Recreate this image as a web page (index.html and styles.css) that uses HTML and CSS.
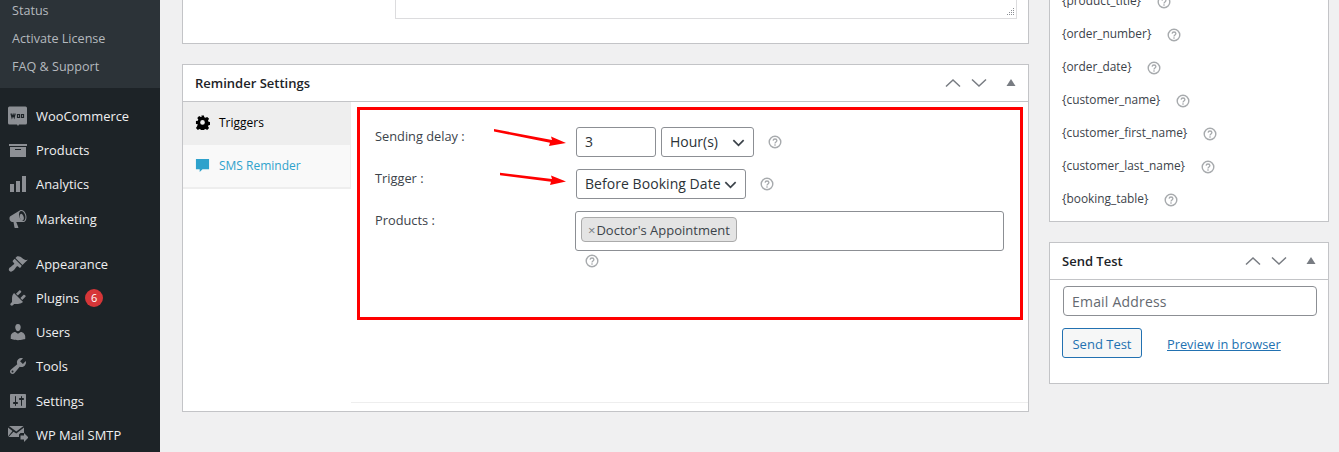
FILE: index.html
```html
<!DOCTYPE html>
<html lang="en">
<head>
<meta charset="utf-8">
<title>Reminder Settings</title>
<link rel="stylesheet" href="styles.css">
</head>
<body>
<aside class="sidebar">
  <ul class="submenu">
    <li>Status</li>
    <li>Activate License</li>
    <li>FAQ &amp; Support</li>
  </ul>
  <ul class="menu">
    <li><svg class="mi" viewBox="0 0 20 20"><path d="M1.500 .5h16A1.500 1.500 0 0 1 19 2v15a1.500 1.500 0 0 1-1.500 1.500H11l-1 1.500-1-1.500H1.500A1.500 1.500 0 0 1 0 17V2A1.500 1.500 0 0 1 1.500 .5z"/><path class="cut" d="M3 7.500l1 4 1.100-3 1.100 3 1-4M9.500 8.500h2v3h-2zM13.500 8.500h2v3h-2z"/></svg>WooCommerce</li>
    <li><svg class="mi" viewBox="0 0 20 20"><path d="M19 4v2H1V4h18zM2 7h16v10H2V7zm11 3V9H7v1h6z"/></svg>Products</li>
    <li><svg class="mi" viewBox="0 0 20 20"><path d="M18 18V2h-4v16h4zm-6 0V7H8v11h4zm-6 0v-8H2v8h4z"/></svg>Analytics</li>
    <li class="sep"><svg class="mi" viewBox="0 0 20 20"><path d="M18.150 5.940c.46 1.620.38 3.220-.02 4.480-.42 1.280-1.260 2.180-2.300 2.480-.16.06-.26.06-.4.06-.06.02-.12.02-.18.02-.06.02-.14.02-.22.02h-6.800l2.220 5.500c.02.14-.06.26-.14.34-.08.1-.24.16-.34.16H6.950c-.1 0-.26-.06-.34-.16-.08-.08-.16-.2-.14-.34l-1-5.500H4.250l-.02-.02c-.5.06-1.080-.18-1.540-.62s-.88-1.080-1.060-1.880c-.24-.8-.2-1.560-.02-2.200.18-.62.58-1.080 1.060-1.300l.02-.02 9-5.400c.1-.06.18-.1.24-.16.06-.04.14-.08.24-.12.16-.08.28-.12.5-.18 1.040-.3 2.240.1 3.220 1 .98.88 1.800 2.240 2.260 3.860zm-2.580 5.980h-.02c.4-.1.74-.34 1.040-.7.58-.7.86-1.760.86-3.040-.02-.64-.1-1.300-.28-1.980-.34-1.360-1.020-2.500-1.780-3.240s-1.680-1.100-2.460-.88c-.82.22-1.400.96-1.700 2-.32 1.040-.28 2.360.06 3.720.38 1.360 1 2.500 1.800 3.240.78.74 1.620 1.100 2.480.88zm-2.540-7.080c.22-.04.42-.02.62.04.38.16.76.48 1.120 1s.66 1.120.84 1.820c.24.68.28 1.380.22 1.980-.08.6-.26 1.160-.64 1.460-.18.18-.38.3-.6.36-.24.06-.46.06-.68-.02-.38-.14-.76-.48-1.100-1s-.68-1.120-.84-1.820c-.24-.7-.28-1.400-.2-1.980.06-.6.26-1.160.62-1.460.18-.2.38-.32.64-.38z"/></svg>Marketing</li>
    <li><svg class="mi" viewBox="0 0 20 20"><path d="M14.480 11.060L7.410 3.990l1.500-1.500c.5-.56 2.300-.47 3.510.32 1.210.8 1.430 1.280 2.910 2.100 1.180.64 2.450 1.260 4.450.85zm-.71.71L6.700 4.700 4.930 6.470c-.39.39-.39 1.020 0 1.410l1.060 1.060c.39.39.39 1.030 0 1.420-.6.6-1.430 1.110-2.210 1.690-.35.26-.7.53-1.010.84C1.430 13.230 0 15.500 1.500 17c1.500 1.500 3.270.07 4.670-1.330.31-.31.58-.66.84-1.010.58-.78 1.090-1.610 1.690-2.210.39-.39 1.030-.39 1.420 0l1.060 1.060c.39.39 1.020.39 1.410 0z"/></svg>Appearance</li>
    <li><svg class="mi" viewBox="0 0 20 20"><path d="M13.110 4.360L9.870 7.600 8 5.730l3.240-3.240c.35-.34 1.050-.2 1.560.32.52.51.66 1.210.31 1.550zm-8 1.770l.91-1.120 9.010 9.010-1.190.84c-.71.71-2.630 1.160-3.820 1.160H6.140L4.900 17.260c-.59.59-1.540.59-2.120 0-.59-.58-.59-1.530 0-2.120l1.240-1.240v-3.880c0-1.130.4-3.190 1.090-3.890zm7.260 3.970l3.240-3.240c.34-.35 1.040-.21 1.550.31.52.51.66 1.210.31 1.550l-3.240 3.250z"/></svg>Plugins<span class="badge">6</span></li>
    <li><svg class="mi" viewBox="0 0 20 20"><path d="M10 9.250c-2.270 0-2.730-3.440-2.730-3.440C7 4.020 7.820 2 9.970 2c2.160 0 2.980 2.020 2.710 3.810 0 0-.41 3.440-2.680 3.440zm0 2.570L12.720 10c2.390 0 4.520 2.330 4.520 4.530v2.490s-3.650 1.130-7.240 1.130c-3.650 0-7.240-1.130-7.240-1.130v-2.490c0-2.250 1.940-4.480 4.470-4.480z"/></svg>Users</li>
    <li><svg class="mi" viewBox="0 0 20 20"><path d="M16.680 9.770c-1.340 1.340-3.300 1.670-4.950.99l-5.410 6.520c-.99.99-2.590.99-3.580 0s-.99-2.590 0-3.570l6.520-5.420c-.68-1.650-.35-3.610.99-4.950 1.280-1.280 3.120-1.620 4.720-1.060l-2.890 2.890 2.820 2.820 2.860-2.870c.53 1.580.18 3.390-1.080 4.650zM3.810 16.210c.4.39 1.040.39 1.430 0 .4-.4.4-1.040 0-1.430-.39-.4-1.030-.4-1.430 0-.39.39-.39 1.030 0 1.430z"/></svg>Tools</li>
    <li><svg class="mi" viewBox="0 0 20 20"><path d="M18 16V4c0-.55-.45-1-1-1H3c-.55 0-1 .45-1 1v12c0 .55.45 1 1 1h14c.55 0 1-.45 1-1zM8 11h1c.55 0 1 .45 1 1s-.45 1-1 1H8v1.500c0 .28-.22.5-.5.5s-.5-.22-.5-.5V13H6c-.55 0-1-.45-1-1s.45-1 1-1h1V5.500c0-.28.22-.5.5-.5s.5.22.5.5V11zm5-2h-1c-.55 0-1-.45-1-1s.45-1 1-1h1V5.500c0-.28.22-.5.5-.5s.5.22.5.5V7h1c.55 0 1 .45 1 1s-.45 1-1 1h-1v5.500c0 .28-.22.5-.5.5s-.5-.22-.5-.5V9z"/></svg>Settings</li>
    <li><svg class="mi" viewBox="0 0 20 20"><path d="M1 1h14.500L8.300 6.500zM0 2.500L4.500 6 0 11.500zM16 2.500V8h-3.500L11 9.500v2.500H.5L5.500 6.800l2.800 1.700L16 2.500zM12.500 10.500h3.500V8l4.500 4.500L16 17v-2.500h-3.500z"/></svg>WP Mail SMTP</li>
  </ul>
</aside>

<main class="content">
  <div class="col-main">
    <section class="card top-card">
      <div class="textarea"><svg class="grip" viewBox="0 0 10 10"><path d="M8 1h1v1H8zM6 3h1v1H6zM8 3h1v1H8zM4 5h1v1H4zM6 5h1v1H6zM8 5h1v1H8zM2 7h1v1H2zM4 7h1v1H4zM6 7h1v1H6zM8 7h1v1H8z"/></svg></div>
    </section>

    <section class="card reminder">
      <header class="card-head">
        <h2>Reminder Settings</h2>
        <div class="head-tools">
          <svg class="tool" viewBox="0 0 16 10"><path d="M1 8.500L8 2l7 6.500"/></svg>
          <svg class="tool" viewBox="0 0 16 10"><path d="M1 1.500L8 8l7-6.500"/></svg>
          <svg class="tri" viewBox="0 0 10 7"><path d="M5 0l4.500 7H.5z"/></svg>
        </div>
      </header>
      <div class="card-body">
        <nav class="tabs">
          <div class="tab active">
            <svg class="tab-ic" viewBox="0 0 16 16"><path d="M6.500 1h3l.4 2 1.300.6 1.800-1 2 2.100-1.100 1.700.5 1.300 2 .4v3l-2 .4-.5 1.300 1.100 1.700-2 2-1.800-1-1.300.5-.4 2h-3l-.4-2-1.300-.5-1.800 1-2-2 1.100-1.700L3 10.500l-2-.4v-3l2-.4.500-1.300-1.100-1.700 2-2.100 1.800 1 1.300-.6zM8 6a2.500 2.500 0 1 0 0 5 2.500 2.500 0 0 0 0-5z" fill-rule="evenodd" transform="translate(0 -.6)"/></svg>
            Triggers
          </div>
          <div class="tab sms">
            <svg class="tab-ic" viewBox="0 0 16 16"><path d="M1 1h14v11H8l-3 3v-3H1z"/></svg>
            SMS Reminder
          </div>
        </nav>
        <div class="panel">
          <div class="form">
            <div class="row row-delay">
              <label>Sending delay :</label>
              <input class="field num" type="text" value="3">
              <select class="field sel hours"><option>Hour(s)</option></select>
              <svg class="help help-delay" viewBox="0 0 14 14"><use href="#q"/></svg>
            </div>
            <div class="row row-trigger">
              <label>Trigger :</label>
              <select class="field sel trigger"><option>Before Booking Date</option></select>
              <svg class="help help-delay" viewBox="0 0 14 14"><use href="#q"/></svg>
            </div>
            <div class="row row-products">
              <label>Products :</label>
              <div class="products-cell">
                <div class="multi"><span class="tag"><span class="x">×</span>Doctor's Appointment</span></div>
                <svg class="help help-prod" viewBox="0 0 14 14"><use href="#q"/></svg>
              </div>
            </div>
          </div>
          <div class="annot"></div>
          <svg class="arrows" viewBox="0 0 300 100">
            <path d="M0 0L58 11L57 7.500L72 14L55 17L56 13.800L0 2.500z"/>
            <path d="M6 43.800L58 50L57 46.500L72 52.500L56 56L57 52.800L6 46.300z"/>
          </svg>
        </div>
      </div>
    </section>
  </div>

  <div class="col-side">
    <section class="card tags">
      <p>{product_title}<svg class="help" viewBox="0 0 14 14"><use href="#q"/></svg></p>
      <p>{order_number}<svg class="help" viewBox="0 0 14 14"><use href="#q"/></svg></p>
      <p>{order_date}<svg class="help" viewBox="0 0 14 14"><use href="#q"/></svg></p>
      <p>{customer_name}<svg class="help" viewBox="0 0 14 14"><use href="#q"/></svg></p>
      <p>{customer_first_name}<svg class="help" viewBox="0 0 14 14"><use href="#q"/></svg></p>
      <p>{customer_last_name}<svg class="help" viewBox="0 0 14 14"><use href="#q"/></svg></p>
      <p>{booking_table}<svg class="help" viewBox="0 0 14 14"><use href="#q"/></svg></p>
    </section>

    <section class="card send">
      <header class="card-head">
        <h2>Send Test</h2>
        <div class="head-tools">
          <svg class="tool" viewBox="0 0 16 10"><path d="M1 8.500L8 2l7 6.500"/></svg>
          <svg class="tool" viewBox="0 0 16 10"><path d="M1 1.500L8 8l7-6.500"/></svg>
          <svg class="tri" viewBox="0 0 10 7"><path d="M5 0l4.500 7H.5z"/></svg>
        </div>
      </header>
      <div class="send-body">
        <input class="email" type="text" placeholder="Email Address">
        <div class="send-actions">
          <button class="btn" type="button">Send Test</button>
          <a class="preview" href="#">Preview in browser</a>
        </div>
      </div>
    </section>
  </div>
</main>

<svg class="defs" width="0" height="0">
  <symbol id="q" viewBox="0 0 14 14">
    <circle cx="7" cy="7" r="5.800" fill="none" stroke="#a7aaad" stroke-width="1.400"/>
    <path d="M5.100 5.600C5.200 4.500 6 4 7 4s1.900.6 1.900 1.600c0 1.300-1.900 1.400-1.900 2.800" fill="none" stroke="#a7aaad" stroke-width="1.300"/>
    <rect x="6.300" y="9.300" width="1.400" height="1.400" fill="#a7aaad"/>
  </symbol>
</svg>
</body>
</html>
```

FILE: styles.css
```css
* { box-sizing: border-box; }
html, body { margin: 0; height: 452px; overflow: hidden; }
body {
  display: flex;
  background: #f0f0f1;
  font-family: "Open Sans", sans-serif;
  font-size: 13px;
  color: #3c434a;
}
ul { list-style: none; margin: 0; padding: 0; }

/* sidebar */
.sidebar { width: 160px; flex: none; height: 452px; background: #1d2327; overflow: hidden; }
.submenu { background: #2c3338; height: 88px; padding-top: 1px; color: #b4b9be; font-size: 12.600px; margin-bottom: 11px; }
.submenu li { height: 28px; line-height: 20px; padding: 0 0 0 12px; }
.menu li { height: 34.200px; display: flex; align-items: center; color: #f0f0f1; font-size: 12.900px; }
.menu li.sep { margin-bottom: 11px; }
.mi { width: 20px; height: 20px; margin: 0 8px 0 8px; flex: none; fill: #8c8f94; }
.mi .cut { fill: none; stroke: #1d2327; stroke-width: 1.200; }
.badge {
  width: 18px; height: 18px; margin-left: 6px; border-radius: 50%;
  background: #d63638; color: #fff; font-size: 11px; line-height: 18px; text-align: center;
}

/* columns */
.content { flex: 1; display: flex; padding-left: 22px; min-width: 0; }
.col-main { width: 847px; flex: none; }
.col-side { width: 280px; flex: none; margin-left: 20px; }
.card { background: #fff; border: 1px solid #c3c4c7; }

.top-card { height: 44px; border-top: 0; padding-left: 212px; margin-bottom: 20px; }
.textarea {
  width: 622px; height: 19px; background: #fff; border: 1px solid #dcdcde; border-top: 0;
  display: flex; justify-content: flex-end; align-items: flex-end;
}
.grip { width: 10px; height: 10px; margin: 0 1px 1px 0; fill: #8c8f94; }

.reminder { height: 348px; display: flex; flex-direction: column; }
.card-head {
  height: 37px; flex: none; display: flex; align-items: center; justify-content: space-between;
  border-bottom: 1px solid #c3c4c7; padding-left: 12px;
}
.card-head h2 { margin: 0; font-size: 13px; font-weight: 600; color: #1d2327; }
.head-tools { display: flex; align-items: center; }
.tool { width: 16px; height: 10px; margin-right: 10px; fill: none; stroke: #787c82; stroke-width: 1.500; }
.tri { width: 10px; height: 7px; margin: 0 12px 2px 9px; fill: #787c82; }
.card-body { flex: 1; display: flex; min-height: 0; }

/* tabs */
.tabs { width: 168px; flex: none; }
.tab { display: flex; align-items: center; gap: 9px; padding-left: 12px; font-size: 12px; }
.tab.active { height: 43px; background: #eee; color: #000; padding-bottom: 2px; }
.tab.sms { height: 44px; background: #f9f9f9; color: #2ea2cc; border-bottom: 2px solid #eee; border-right: 1px solid #eee; padding-bottom: 2px; }
.tab-ic { width: 15px; height: 15px; flex: none; fill: currentColor; }

/* panel */
.panel { position: relative; flex: 1; border-bottom: 1px solid #eee; margin-bottom: 8px; }
.form { padding: 25px 24px 0 24px; }
.row { display: flex; align-items: flex-start; }
.row label { width: 201px; flex: none; font-size: 12.800px; color: #3c434a; line-height: 18px; }
.row-delay { height: 42px; }
.row-trigger { height: 42px; }
.field {
  height: 30px; background-color: #fff; border: 1px solid #8c8f94; border-radius: 3px;
  font-family: inherit; font-size: 14px; color: #2c3338; padding: 0 8px 2px; margin: 0;
}
.num { width: 80px; margin-right: 5px; }
.sel {
  appearance: none; -webkit-appearance: none;
  background-image: url("data:image/svg+xml,%3Csvg xmlns='http://www.w3.org/2000/svg' viewBox='0 0 16 16'%3E%3Cpath d='M2.500 5.500L8 11l5.500-5.500' fill='none' stroke='%233c434a' stroke-width='1.800'/%3E%3C/svg%3E");
  background-repeat: no-repeat; background-position: right 7px center; background-size: 15px 15px;
}
.hours { width: 93px; }
.trigger { width: 170px; letter-spacing: .05px; }
.help { width: 14px; height: 14px; flex: none; }
.help-delay { margin: 8px 0 0 14px; }
.products-cell { flex: 1; margin-left: -1px; }
.multi {
  width: 429px; height: 40px; border: 1px solid #8c8f94; border-radius: 3px; padding: 5px;
}
.tag {
  display: inline-flex; align-items: center; height: 25px; width: 156px;
  background: #e4e4e4; border: 1px solid #aaa; border-radius: 4px; padding-left: 6px;
  font-size: 13px; color: #3c434a; white-space: nowrap;
}
.x { color: #787c82; margin-right: 1px; }
.help-prod { display: block; margin: 3px 0 0 10px; }

/* overlays */
.annot { position: absolute; left: 6px; top: 5px; width: 666px; height: 213px; border: 3px solid #f00; }
.arrows { position: absolute; left: 143px; top: 27px; width: 300px; height: 100px; fill: #f00; }

/* side */
.tags { height: 240px; margin-top: -18px; padding: 0 12px; margin-bottom: 20px; }
.tags p { margin: 0; height: 33px; display: flex; align-items: center; font-size: 11.900px; color: #3c434a; }
.tags .help { margin-left: 15.500px; margin-top: 5px; }
.send { height: 142px; }
.send-body { padding: 6px 11px 0 13px; }
.email {
  display: block; width: 254px; height: 30px; border: 1px solid #8c8f94; border-radius: 4px;
  font-family: inherit; font-size: 14px; letter-spacing: .2px; padding: 0 8px; margin: 0; color: #2c3338;
}
.email::placeholder { color: #646970; opacity: 1; }
.send-actions { display: flex; align-items: center; margin: 12px 0 0 -1px; }
.btn {
  width: 80px; height: 30px; border: 1px solid #2271b1; border-radius: 3px; background: #f6f7f7;
  color: #2271b1; font-family: inherit; font-size: 13px; padding: 1px 0 0;
}
.preview { margin-left: 25px; margin-top: 2px; color: #2271b1; font-size: 12.800px; }
.defs { position: absolute; }
```
